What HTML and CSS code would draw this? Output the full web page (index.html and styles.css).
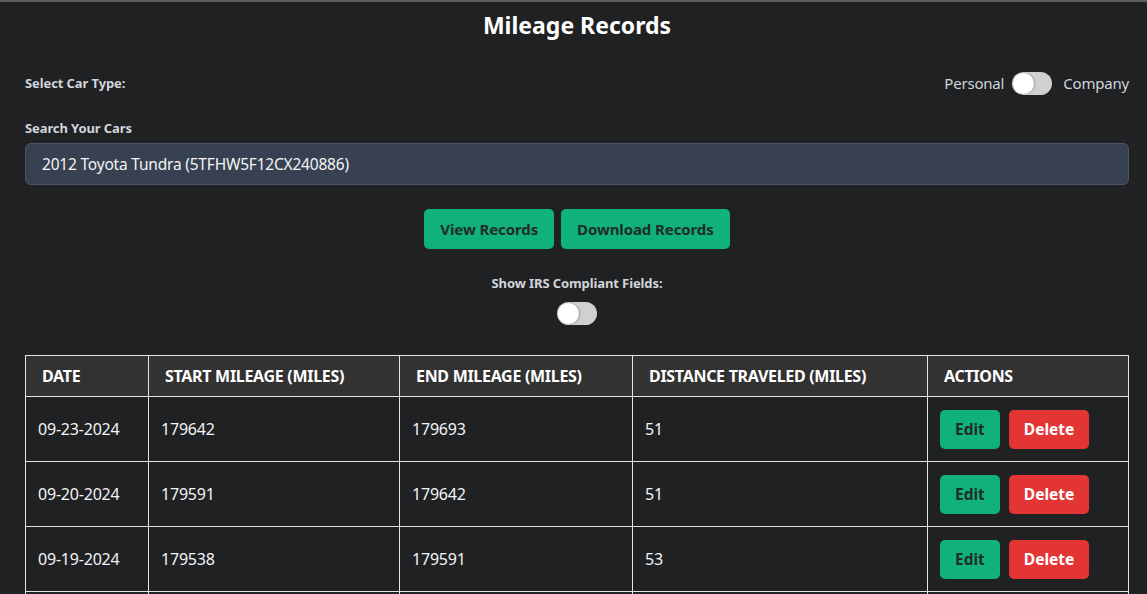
FILE: index.html
```html
<!DOCTYPE html>
<html>
<head>
<meta charset="utf-8">
<link rel="stylesheet" href="styles.css">
</head>
<body>
<div class="page">
  <h1 class="title">Mileage Records</h1>
  <div class="type-row">
    <span class="label">Select Car Type:</span>
    <div class="type-toggle">
      <span class="opt">Personal</span>
      <span class="switch"><span class="knob"></span></span>
      <span class="opt">Company</span>
    </div>
  </div>
  <div class="search">
    <div class="label">Search Your Cars</div>
    <div class="input">2012 Toyota Tundra (5TFHW5F12CX240886)</div>
  </div>
  <div class="actions">
    <button class="btn green big">View Records</button>
    <button class="btn green big">Download Records</button>
  </div>
  <div class="irs">
    <div class="label">Show IRS Compliant Fields:</div>
    <span class="switch"><span class="knob"></span></span>
  </div>
  <table class="records">
    <colgroup>
      <col class="c1"><col class="c2"><col class="c3"><col class="c4"><col class="c5">
    </colgroup>
    <thead>
      <tr><th>Date</th><th>Start Mileage (Miles)</th><th>End Mileage (Miles)</th><th>Distance Traveled (Miles)</th><th>Actions</th></tr>
    </thead>
    <tbody>
      <tr><td>09-23-2024</td><td>179642</td><td>179693</td><td>51</td><td><div class="row-btns"><button class="btn green sm">Edit</button><button class="btn red sm">Delete</button></div></td></tr>
      <tr><td>09-20-2024</td><td>179591</td><td>179642</td><td>51</td><td><div class="row-btns"><button class="btn green sm">Edit</button><button class="btn red sm">Delete</button></div></td></tr>
      <tr><td>09-19-2024</td><td>179538</td><td>179591</td><td>53</td><td><div class="row-btns"><button class="btn green sm">Edit</button><button class="btn red sm">Delete</button></div></td></tr>
      <tr class="more"><td></td><td></td><td></td><td></td><td></td></tr>
    </tbody>
  </table>
</div>
</body>
</html>
```

FILE: styles.css
```css
html, body {
  margin: 0;
  padding: 0;
  background: #202123;
  height: 100%;
  overflow: hidden;
}
body {
  border-top: 2px solid #5e5e60;
  font-family: "Noto Sans", "Open Sans", sans-serif;
  color: #e5e7eb;
}
.page {
  padding: 0 18px 0 25px;
}
.title {
  margin: 0;
  padding-top: 7px;
  height: 40px;
  line-height: 32px;
  font-size: 23px;
  font-weight: 700;
  color: #fff;
  text-align: center;
}
.label {
  font-size: 13px;
  font-weight: 700;
  color: #d1d5db;
  letter-spacing: -0.1px;
}
.type-row {
  display: flex;
  justify-content: space-between;
  align-items: center;
  margin-top: 22px;
  height: 24px;
}
.type-toggle {
  display: flex;
  align-items: center;
  gap: 8px;
}
.type-toggle .opt {
  font-size: 15px;
  color: #d1d5db;
  letter-spacing: -0.2px;
}
.type-toggle .opt:last-child { margin-left: 3px; }
.switch {
  display: inline-block;
  position: relative;
  width: 40px;
  height: 23px;
  border-radius: 12px;
  background: #cfd0d2;
}
.knob {
  position: absolute;
  left: 1px;
  top: 1px;
  width: 21px;
  height: 21px;
  border-radius: 50%;
  background: #fff;
  box-shadow: 1px 0 2px rgba(0,0,0,0.25);
}
.search {
  margin-top: 25px;
}
.search .label {
  line-height: 17px;
  margin-bottom: 6px;
}
.input {
  box-sizing: border-box;
  height: 42px;
  background: #374151;
  border: 1px solid #4b5563;
  border-radius: 6px;
  padding: 0 16px;
  line-height: 40px;
  font-size: 15.5px;
  color: #f3f4f6;
  letter-spacing: -0.2px;
}
.actions {
  display: flex;
  justify-content: center;
  gap: 7px;
  margin-top: 24px;
}
.btn {
  border: none;
  font-family: inherit;
  font-weight: 700;
  border-radius: 5px;
  cursor: pointer;
}
.btn.green { background: #10b27a; color: #1f2d2a; }
.btn.red { background: #e43535; color: #fff; }
.btn.big {
  height: 40px;
  font-size: 15px;
  padding: 0 16px;
  letter-spacing: -0.1px;
}
.irs {
  margin-top: 26px;
  display: flex;
  flex-direction: column;
  align-items: center;
  gap: 10px;
}
.irs .label { line-height: 17px; }
.records {
  margin-top: 30px;
  width: 100%;
  border-collapse: collapse;
  table-layout: fixed;
}
.c1 { width: 123px; }
.c2 { width: 251px; }
.c3 { width: 233px; }
.c4 { width: 295px; }
.c5 { width: auto; }
.records th, .records td {
  border: 1px solid #e5e5e5;
  text-align: left;
  padding: 0 16px;
}
.records th {
  background: #323232;
  color: #fff;
  height: 40px;
  font-size: 16px;
  font-weight: 700;
  text-transform: uppercase;
  letter-spacing: -0.3px;
}
.records td {
  height: 64px;
  font-size: 16px;
  color: #f3f4f6;
  padding-left: 12px;
  letter-spacing: -0.2px;
}
.row-btns {
  display: flex;
  gap: 9px;
}
.btn.sm {
  height: 39px;
  font-size: 15.5px;
  padding: 0 15px;
}
```
